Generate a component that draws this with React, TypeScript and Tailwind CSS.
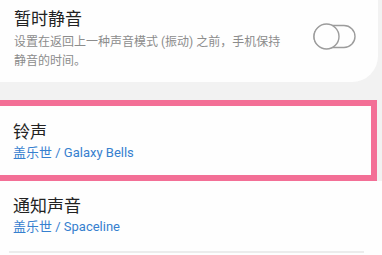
const font = { fontFamily: 'Roboto, "Noto Sans CJK SC", sans-serif' };

function Toggle() {
  return (
    <svg width="43" height="27" viewBox="0 0 43 27" fill="none">
      <rect x="1" y="2.5" width="41" height="22" rx="11" stroke="#9c9c9c" strokeWidth="1.4" fill="#fefefe" />
      <circle cx="13.5" cy="13.5" r="12.5" stroke="#9c9c9c" strokeWidth="1.4" fill="#fefefe" />
    </svg>
  );
}

function Row({ title, sub }: { title: string; sub: string }) {
  return (
    <div className="flex flex-col pl-[13px]">
      <span className="text-[17px] leading-[24px] text-[#222]">{title}</span>
      <span className="text-[13px] leading-[18px] text-[#3680cf]">{sub}</span>
    </div>
  );
}

export default function App() {
  return (
    <div className="w-[382px] h-[255px] bg-[#f2f2f2] overflow-hidden flex flex-col" style={font}>
      {/* do not disturb */}
      <div className="h-[82px] mr-[4px] bg-[#fefefe] rounded-br-[26px] flex items-start justify-between pl-[14px] pr-[22px] pt-[7px] shrink-0">
        <div className="flex flex-col w-[276px]">
          <span className="text-[17px] leading-[24px] text-[#222]">暂时静音</span>
          <span className="mt-[2px] text-[12px] leading-[19px] text-[#8c8c8c]">
            设置在返回上一种声音模式 (振动) 之前，手机保持静音的时间。
          </span>
        </div>
        <div className="mt-[16px]">
          <Toggle />
        </div>
      </div>

      {/* ringtone, highlighted */}
      <div className="mt-[18px] h-[81px] w-[377px] bg-[#fefefe] border-y-[6px] border-r-[6px] border-[#f36f96] pt-[14px] shrink-0">
        <Row title="铃声" sub="盖乐世 / Galaxy Bells" />
      </div>

      {/* notification sound */}
      <div className="flex-1 bg-[#fefefe] pt-[13px]">
        <Row title="通知声音" sub="盖乐世 / Spaceline" />
        <div className="mt-[15px] ml-[9px] w-[355px] h-[2px] bg-[#ececec]" />
      </div>
    </div>
  );
}
